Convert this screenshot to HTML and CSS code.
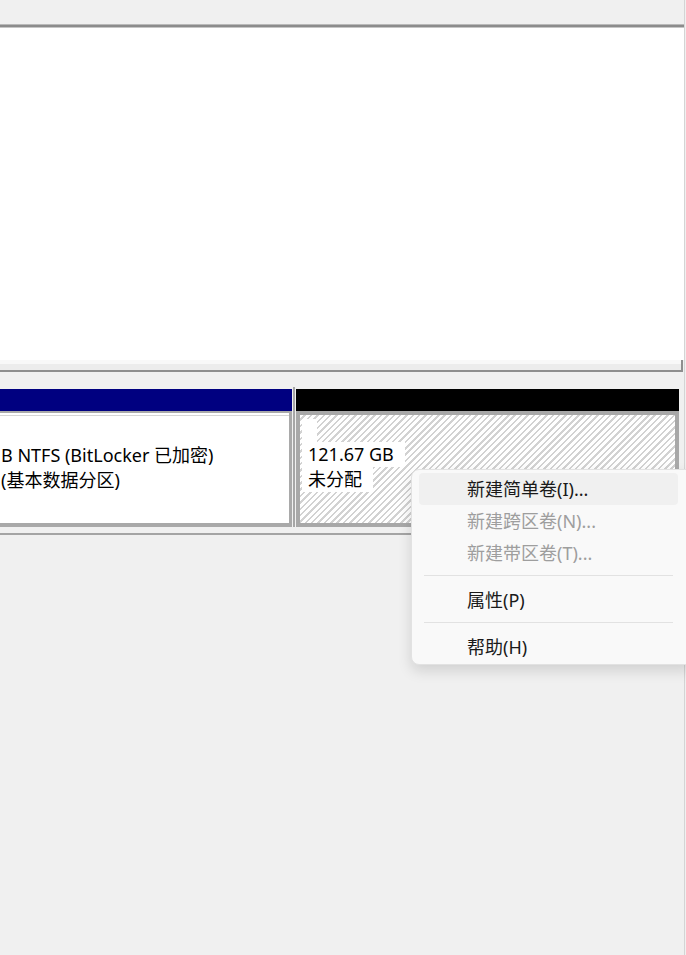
FILE: index.html
```html
<!DOCTYPE html>
<html lang="zh-CN">
<head>
    <meta charset="UTF-8">
    <meta name="viewport" content="width=device-width, initial-scale=1.0">
    <title>磁盘管理</title>
    <link rel="stylesheet" href="styles.css">
</head>
<body>

<div class="window">
    <div class="toolbar"></div>
    <div class="list-pane"></div>
    <div class="pane-foot"></div>

    <div class="disk-area">
        <div class="disk-row">
            <div class="part primary">
                <div class="part-head"></div>
                <div class="part-body">
                    <div class="label">&nbsp;</div>
                    <div class="label">B NTFS (BitLocker 已加密)</div>
                    <div class="label">(基本数据分区)</div>
                </div>
            </div>
            <div class="part unalloc">
                <div class="part-head"></div>
                <div class="part-body">
                    <span class="label"></span>
                    <span class="label">121.67 GB</span>
                    <span class="label">未分配</span>
                </div>
            </div>
        </div>
    </div>
</div>

<div class="context-menu">
    <div class="menu-item active">新建简单卷(I)...</div>
    <div class="menu-item disabled">新建跨区卷(N)...</div>
    <div class="menu-item disabled">新建带区卷(T)...</div>
    <div class="menu-sep"></div>
    <div class="menu-item">属性(P)</div>
    <div class="menu-sep"></div>
    <div class="menu-item">帮助(H)</div>
</div>

</body>
</html>
```

FILE: styles.css
```css
body {
    margin: 0;
    width: 686px;
    height: 955px;
    overflow: hidden;
    background-color: #f0f0f0;
    font-family: "Noto Sans", "Noto Sans CJK SC", sans-serif;
    font-size: 18px;
    color: #000;
    position: relative;
}
.window {
    width: 684px;
    height: 955px;
    border-right: 1px solid #d4d4d4;
}
.toolbar {
    height: 24px;
    border-bottom: 1px solid #b9b9b9;
}
.list-pane {
    height: 333px;
    background-color: #fff;
    border-top: 2px solid #8c8c8c;
    box-shadow: inset 0 1px 0 #c6c6c6;
}
.pane-foot {
    height: 10px;
    background: linear-gradient(#f8f8f8 0 4px, #ececec 4px);
    border-bottom: 2px solid #8e8e8e;
    border-right: 2px solid #8e8e8e;
    margin-right: 1px;
}
.disk-area {
    padding-top: 15px;
}
.disk-row {
    display: flex;
    width: 680px;
    padding-bottom: 6px;
    border-bottom: 2px solid #a4a4a4;
}
.part {
    padding-top: 2px;
}
.part-head {
    height: 22px;
}
.part-body {
    height: 106px;
    line-height: 25px;
    white-space: nowrap;
}
.primary {
    width: 292px;
}
.primary .part-head {
    background-color: #000080;
}
.primary .part-body {
    height: 105px;
    background-color: #fff;
    border: 2px solid #a9a9a9;
    border-left: none;
    border-bottom-width: 4px;
    border-right-width: 3px;
    padding-top: 5px;
    box-shadow: inset 0 2px 0 #fff, inset 0 3px 0 #d6d6d6;
}
.primary .label {
    padding-left: 1px;
}
.unalloc {
    width: 383px;
    margin-left: 1px;
    padding-left: 1px;
    border-left: 2px solid #a6a6a6;
}
.unalloc .part-head {
    background-color: #000;
}
.unalloc .part-body {
    border: 4px solid #a8a8a8;
    padding-top: 4px;
    height: 104px;
    display: flex;
    flex-direction: column;
    align-items: flex-start;
    background: repeating-linear-gradient(135deg, #fff 0 2.8px, #d2d2d2 2.8px 4.5px);
}
.unalloc .label {
    background-color: #fff;
    padding: 0 11px 0 6px;
    min-height: 23px;
    margin-left: 2px;
}
.unalloc .label:empty {
    width: 0;
    padding-right: 9px;
}
.context-menu {
    position: absolute;
    left: 411px;
    top: 469px;
    width: 259px;
    padding: 2px 15px 2px 7px;
    background-color: #f9f9f9;
    border: 1px solid #e2e2e2;
    border-radius: 8px;
    box-shadow: 0 6px 14px rgba(0, 0, 0, 0.13);
    color: #1a1a1a;
}
.menu-item {
    height: 32px;
    line-height: 32px;
    padding-left: 48px;
    border-radius: 4px;
    position: relative;
    top: 1px;
}
.menu-item.active {
    background-color: #f0f0f0;
}
.menu-item.disabled {
    color: #9e9e9e;
}
.menu-sep {
    height: 1px;
    margin: 7px 5px;
    background-color: #e2e2e2;
}
```
